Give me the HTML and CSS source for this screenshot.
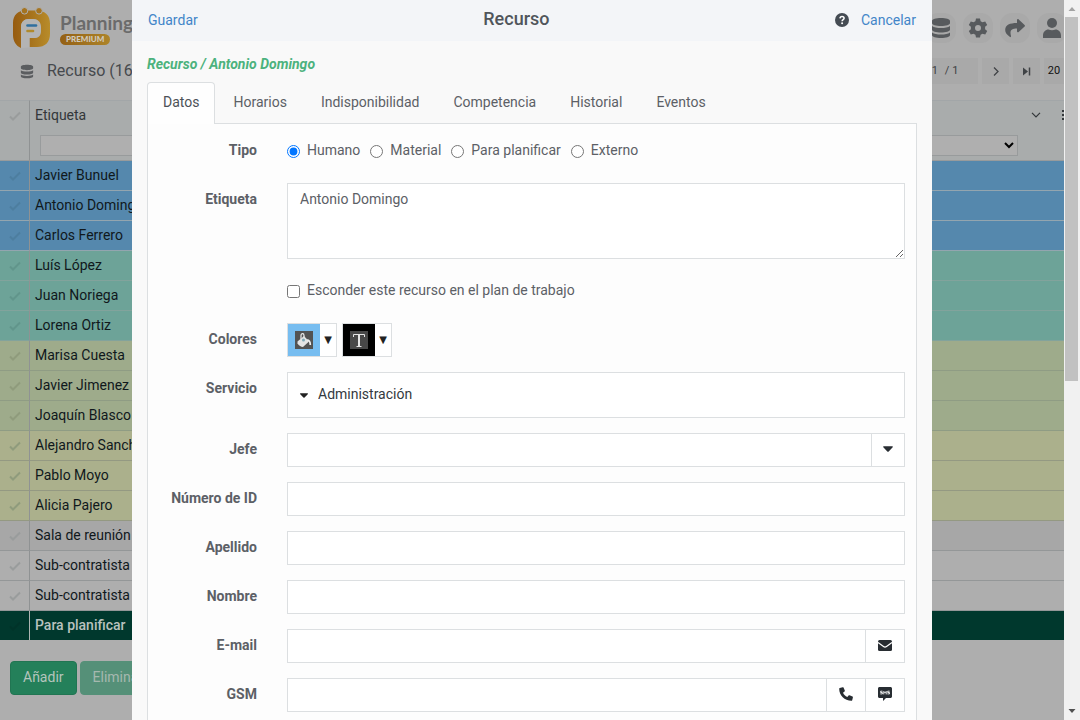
FILE: index.html
```html
<!DOCTYPE html>
<html lang="es">
<head>
<meta charset="utf-8">
<meta name="viewport" content="width=device-width, initial-scale=1">
<title>Recurso</title>
<link rel="stylesheet" href="styles.css">
</head>
<body>
<svg class="defs" aria-hidden="true">
  <symbol id="i-check" viewBox="0 0 12 10"><path d="M1 5.500 4 8.500 11 1.500" fill="none" stroke="currentColor" stroke-width="2"/></symbol>
  <symbol id="i-db" viewBox="0 0 20 22"><path d="M1 4C1 2 5 1 10 1s9 1 9 3v2c0 2-4 3-9 3S1 8 1 6zM1 9c2 1.600 5 2 9 2s7-.4 9-2v3.500c0 2-4 3-9 3s-9-1-9-3zM1 15.500c2 1.600 5 2 9 2s7-.4 9-2V18c0 2-4 3-9 3s-9-1-9-3z" fill="currentColor"/></symbol>
  <symbol id="i-gear" viewBox="0 0 20 20"><path fill="currentColor" fill-rule="evenodd" d="M8 .5h4l.6 2.700 1.900 1.100 2.700-.9 2 3.500-2.100 1.900v2.400l2.100 1.900-2 3.500-2.700-.9-1.900 1.100L12 19.500H8l-.6-2.700-1.900-1.100-2.700.9-2-3.500 2.100-1.900V8.800L.8 6.900l2-3.500 2.700.9 1.900-1.100zM10 7a3 3 0 1 0 0 6 3 3 0 0 0 0-6z"/></symbol>
  <symbol id="i-share" viewBox="0 0 20 19"><path fill="currentColor" d="M12 1.200c0-1 1-1.400 1.700-.8l5.900 5.500c.5.500.5 1.100 0 1.600l-5.900 5.500c-.7.600-1.700.2-1.700-.7V9.500c-5.500 0-7.500 1.600-6 7.600.2.900-.6 1.400-1.300.7C1.500 15.500.2 13.400.2 11c0-5.400 4.600-7 11.800-7.100z"/></symbol>
  <symbol id="i-user" viewBox="0 0 18 20"><circle cx="9" cy="5" r="5" fill="currentColor"/><path fill="currentColor" d="M0 20v-2.500C0 14 2.500 11.500 5.500 11.500c2 1 5 1 7 0 3 0 5.500 2.500 5.500 6V20z"/></symbol>
  <symbol id="i-caret" viewBox="0 0 10 6"><path fill="currentColor" d="M.8.300h8.400c.7 0 .9.500.5 1L5.700 5.400c-.4.400-1 .4-1.400 0L.300 1.300c-.4-.5-.2-1 .5-1z"/></symbol>
  <symbol id="i-chev" viewBox="0 0 10 6"><path d="M1 .8 5 4.800 9 .8" fill="none" stroke="currentColor" stroke-width="1.200"/></symbol>
</svg>

<div class="app">
  <header class="topbar">
    <div class="brand">
      <svg class="logo" viewBox="0 0 40 42" role="img" aria-label="PlanningPME">
        <defs><linearGradient id="gold" x1="0" x2="1"><stop offset="0" stop-color="#965b10"/><stop offset="1" stop-color="#b88c2a"/></linearGradient></defs>
        <path fill="url(#gold)" d="M9 41C4 39 1 34 1 28V16C1 8 6 3.500 14 3.500h11c8 0 13 5 13 13v10c0 9-5 13.500-13 13.500h-7.500V31H22c4 0 6-3 6-7v-4c0-5-3-8-7-8h-4c-5 0-8 3-8 8z"/>
        <path fill="#b4b4b4" d="M9 41V20c0-5 3-8 8-8h4c5 0 8 3 8 8v4c0 4-2 7-6 7h-5.500v9.500z"/>
        <circle cx="12.500" cy="3.800" r="3.300" fill="#a57420" stroke="#b0b0b0"/><circle cx="27" cy="3.800" r="3.300" fill="#a57420" stroke="#b0b0b0"/>
        <path d="M15.500 18.500h8.500" stroke="#2f6f9f" stroke-width="2.600" stroke-linecap="round"/>
        <path d="M15.500 24h5.500" stroke="#b08a2c" stroke-width="2.600" stroke-linecap="round"/>
      </svg>
      <div class="brand-text"><span class="brand-name">Planning</span><span class="premium">PREMIUM</span></div>
    </div>
    <nav class="tools" aria-label="Herramientas">
      <button class="tool" aria-label="Datos"><svg width="20" height="22"><use href="#i-db"/></svg></button>
      <button class="tool" aria-label="Ajustes"><svg width="20" height="20"><use href="#i-gear"/></svg></button>
      <button class="tool" aria-label="Compartir"><svg width="20" height="19"><use href="#i-share"/></svg></button>
      <button class="tool" aria-label="Usuario"><svg width="18" height="20"><use href="#i-user"/></svg></button>
    </nav>
  </header>
  <div class="titlebar">
    <h1 class="page-title"><svg width="14" height="15"><use href="#i-db"/></svg>Recurso (16)</h1>
    <div class="pager">
      <span class="page-pos"><span>1</span><span>/ 1</span></span>
      <button class="page-btn" aria-label="Siguiente"><svg width="6" height="9" viewBox="0 0 6 9"><path d="M1 .5 5 4.500 1 8.500" fill="none" stroke="currentColor" stroke-width="1.300"/></svg></button>
      <button class="page-btn" aria-label="Última"><svg width="8" height="9" viewBox="0 0 8 9"><path d="M0 .5 5 4.500 0 8.500z" fill="currentColor"/><path d="M6.500.500v8" stroke="currentColor" stroke-width="1.500"/></svg></button>
      <button class="page-size">20</button>
    </div>
  </div>
  <table class="grid">
    <thead>
      <tr class="head"><th class="tick"><svg width="12" height="10"><use href="#i-check"/></svg></th>
        <th><div class="head-cell"><span>Etiqueta</span><span class="head-icons"><svg width="10" height="6"><use href="#i-chev"/></svg><svg width="2" height="10" viewBox="0 0 2 10"><path d="M1 0v10" stroke="currentColor" stroke-width="2" stroke-dasharray="2"/></svg></span></div></th></tr>
      <tr class="filter"><th class="tick"></th><th><div class="filter-cell"><input type="text" aria-label="Filtrar etiqueta"><select aria-label="Filtro"><option></option></select></div></th></tr>
    </thead>
    <tbody>
      <tr class="blue"><td class="tick"><svg width="12" height="10"><use href="#i-check"/></svg></td><td>Javier Bunuel</td></tr>
      <tr class="blue"><td class="tick"><svg width="12" height="10"><use href="#i-check"/></svg></td><td>Antonio Domingo</td></tr>
      <tr class="blue"><td class="tick"><svg width="12" height="10"><use href="#i-check"/></svg></td><td>Carlos Ferrero</td></tr>
      <tr class="teal"><td class="tick"><svg width="12" height="10"><use href="#i-check"/></svg></td><td>Luís López</td></tr>
      <tr class="teal"><td class="tick"><svg width="12" height="10"><use href="#i-check"/></svg></td><td>Juan Noriega</td></tr>
      <tr class="teal"><td class="tick"><svg width="12" height="10"><use href="#i-check"/></svg></td><td>Lorena Ortiz</td></tr>
      <tr class="green"><td class="tick"><svg width="12" height="10"><use href="#i-check"/></svg></td><td>Marisa Cuesta</td></tr>
      <tr class="green"><td class="tick"><svg width="12" height="10"><use href="#i-check"/></svg></td><td>Javier Jimenez</td></tr>
      <tr class="green"><td class="tick"><svg width="12" height="10"><use href="#i-check"/></svg></td><td>Joaquín Blasco</td></tr>
      <tr class="yellow"><td class="tick"><svg width="12" height="10"><use href="#i-check"/></svg></td><td>Alejandro Sanchez</td></tr>
      <tr class="yellow"><td class="tick"><svg width="12" height="10"><use href="#i-check"/></svg></td><td>Pablo Moyo</td></tr>
      <tr class="yellow"><td class="tick"><svg width="12" height="10"><use href="#i-check"/></svg></td><td>Alicia Pajero</td></tr>
      <tr class="gray"><td class="tick"><svg width="12" height="10"><use href="#i-check"/></svg></td><td>Sala de reunión</td></tr>
      <tr><td class="tick"><svg width="12" height="10"><use href="#i-check"/></svg></td><td>Sub-contratista</td></tr>
      <tr><td class="tick"><svg width="12" height="10"><use href="#i-check"/></svg></td><td>Sub-contratista</td></tr>
      <tr class="dark"><td class="tick"><svg width="12" height="10"><use href="#i-check"/></svg></td><td>Para planificar</td></tr>
    </tbody>
  </table>
  <div class="actions"><button class="action">Añadir</button><button class="action muted">Eliminar</button></div>

  <div class="overlay">
    <form class="modal" role="dialog" aria-labelledby="dlg-title">
      <header class="modal-head">
        <a class="link" href="#guardar">Guardar</a>
        <h2 class="modal-title" id="dlg-title">Recurso</h2>
        <div class="head-right">
          <svg width="14" height="14" viewBox="0 0 14 14" aria-label="Ayuda"><circle cx="7" cy="7" r="7" fill="#444b53"/><path d="M5 5.400C5.100 4 6 3.500 7 3.500c1.200 0 2.100.7 2.100 1.800C9.100 6.700 7.100 6.700 7.100 8.300" fill="none" stroke="#fff" stroke-width="1.500"/><circle cx="7.100" cy="10.300" r="1" fill="#fff"/></svg>
          <a class="link" href="#cancelar">Cancelar</a>
        </div>
      </header>
      <div class="modal-body">
        <p class="crumb">Recurso / Antonio Domingo</p>
        <nav class="tabs">
          <a class="tab active" href="#datos">Datos</a><a class="tab" href="#horarios">Horarios</a><a class="tab" href="#indisponibilidad">Indisponibilidad</a><a class="tab" href="#competencia">Competencia</a><a class="tab" href="#historial">Historial</a><a class="tab" href="#eventos">Eventos</a>
        </nav>
        <div class="panel">
          <div class="row"><span class="label" id="l-tipo">Tipo</span>
            <div class="choices" role="radiogroup" aria-labelledby="l-tipo">
              <label class="choice"><input type="radio" name="tipo" checked>Humano</label>
              <label class="choice"><input type="radio" name="tipo">Material</label>
              <label class="choice"><input type="radio" name="tipo">Para planificar</label>
              <label class="choice"><input type="radio" name="tipo">Externo</label>
            </div></div>
          <div class="row"><label class="label" for="etiqueta">Etiqueta</label><textarea class="field area" id="etiqueta">Antonio Domingo</textarea></div>
          <div class="row"><span></span><div class="choices"><label class="choice"><input type="checkbox">Esconder este recurso en el plan de trabajo</label></div></div>
          <div class="row"><span class="label">Colores</span>
            <div class="colors">
              <button type="button" class="color" aria-label="Color de fondo"><span class="swatch sky"><svg width="18" height="18" viewBox="0 0 18 18"><path fill="#535353" d="M0 0h18v18H0z"/><path d="M6 8V4.500C6 2 9 2 9 4.500V8" fill="none" stroke="#eee" stroke-width="1.200"/><path fill="#e4e4e4" d="M2.500 10.500 9 5l5 5.500-6 5.500c-2 0-4-1.500-5.500-3.500z"/><circle cx="8.500" cy="9" r="1.500" fill="#7fa9b5"/><path d="M12 9c2.500 0 3.300 1.500 3.300 5" fill="none" stroke="#eee" stroke-width="1.700"/></svg></span><span class="drop">▼</span></button>
              <button type="button" class="color" aria-label="Color de texto"><span class="swatch black"><svg width="18" height="18" viewBox="0 0 18 18"><path fill="#484848" d="M0 0h18v18H0z"/><path d="M3.500 6V3.500h11V6M6.500 15.500h5" fill="none" stroke="#e4e4e4"/><path d="M9 3.500v12" stroke="#e4e4e4" stroke-width="2"/></svg></span><span class="drop">▼</span></button>
            </div></div>
          <div class="row"><label class="label" for="servicio">Servicio</label><div class="select-wrap"><select class="field" id="servicio"><option>Administración</option></select><svg class="select-caret" width="8" height="5"><use href="#i-caret"/></svg></div></div>
          <div class="row"><label class="label" for="jefe">Jefe</label><div class="group"><input class="field" id="jefe" type="text"><button type="button" class="addon narrow" aria-label="Abrir"><svg width="10" height="6"><use href="#i-caret"/></svg></button></div></div>
          <div class="row"><label class="label" for="nid">Número de ID</label><input class="field" id="nid" type="text"></div>
          <div class="row"><label class="label" for="apellido">Apellido</label><input class="field" id="apellido" type="text"></div>
          <div class="row"><label class="label" for="nombre">Nombre</label><input class="field" id="nombre" type="text"></div>
          <div class="row"><label class="label" for="email">E-mail</label><div class="group"><input class="field" id="email" type="email"><button type="button" class="addon" aria-label="Enviar e-mail"><svg width="14" height="11" viewBox="0 0 14 11"><rect width="14" height="11" rx="1.500" fill="currentColor"/><path d="M0 2.500 5.500 6.500c1 .8 2 .8 3 0L14 2.500" fill="none" stroke="#fff" stroke-width="1.200"/></svg></button></div></div>
          <div class="row"><label class="label" for="gsm">GSM</label><div class="group"><input class="field" id="gsm" type="tel"><button type="button" class="addon" aria-label="Llamar"><svg width="14" height="14" viewBox="0 0 14 14"><path fill="currentColor" d="M.8 1 3.600.200c.4-.1.700.1.900.4l1.300 3c.1.300 0 .7-.2.900L4 5.700C5 7.700 6.300 9 8.300 10l1.300-1.600c.2-.3.600-.3.900-.2l3 1.300c.3.100.5.500.4.900l-.7 2.800c-.1.400-.4.600-.8.600C5.600 13.800.2 8.400.2 1.800c0-.4.200-.7.600-.8z"/></svg></button><button type="button" class="addon" aria-label="Enviar SMS"><svg width="14" height="14" viewBox="0 0 14 14"><path fill="currentColor" d="M1.500 0h11c.8 0 1.500.7 1.500 1.500v8c0 .8-.7 1.500-1.500 1.500H8l-3 3v-3H1.500C.7 11 0 10.300 0 9.500v-8C0 .7.700 0 1.500 0z"/><path d="M4.500 4.200H2.600v1.300h1.800v1.400H2.300M5.800 7.400V4.400L7 5.900l1.200-1.500v3M11.600 4.200H9.700v1.300h1.800v1.400H9.400" fill="none" stroke="#fff" stroke-width=".9"/></svg></button></div></div>
        </div>
      </div>
    </form>
  </div>
</div>
<div class="scroll" aria-hidden="true">
  <svg class="scroll-arrow" viewBox="0 0 16 17"><path d="M4.500 11 8 7l3.500 4z" fill="#a3a3a3"/></svg>
  <div class="track"><div class="thumb"></div></div>
  <svg class="scroll-arrow" viewBox="0 0 16 17"><path d="M4.500 6 8 10l3.500-4z" fill="#505050"/></svg>
</div>
</body>
</html>
```

FILE: styles.css
```css
* { box-sizing: border-box; }
body {
  margin: 0;
  display: flex;
  height: 100vh;
  overflow: hidden;
  font: 14px/20px Roboto, "Open Sans", sans-serif;
  color: #5c6066;
}
button, input, select, textarea { font: inherit; color: inherit; }
button { padding: 0; border: 0; cursor: pointer; }
svg { display: block; flex: none; }
.defs { position: absolute; width: 0; height: 0; }

/* Background application */
.app { position: relative; flex: 1; min-width: 0; overflow: hidden; background: #aeaeae; color: #3d4043; }
.topbar { display: flex; justify-content: space-between; align-items: center; height: 56px; padding: 0 0 0 12px; }
.brand { display: flex; align-items: center; gap: 8px; }
.logo { width: 40px; height: 42px; }
.brand-text { display: flex; flex-direction: column; align-items: flex-start; }
.brand-name { font: 700 19px/22px Lato, sans-serif; color: #6b6b6b; }
.premium { padding: 0 6px; border-radius: 6px; background: linear-gradient(90deg, #946015, #ad8429); color: #d0cbc0; font: 900 8px/11px Lato, sans-serif; letter-spacing: 0; }
.tools { display: flex; gap: 7px; margin-right: -3px; }
.tool { display: grid; place-items: center; width: 30px; height: 30px; border-radius: 12px; background: #a9a9a9; color: #575a5d; }
.titlebar { display: flex; justify-content: space-between; align-items: center; height: 44px; padding: 0 0 14px 20px; }
.page-title { display: flex; align-items: center; gap: 13px; margin: 0; font-size: 16px; font-weight: 400; color: #46494d; }
.page-title svg { color: #5b5d60; }
.pager { display: flex; gap: 4px; font-size: 11px; }
.page-pos, .page-btn, .page-size { display: flex; align-items: center; justify-content: center; height: 26px; background: #a9a9a9; }
.page-pos { gap: 7px; width: 66px; }
.page-btn { width: 27px; color: #404346; }
.page-size { width: 20px; color: #111; }

.grid { width: 100%; border-collapse: separate; border-spacing: 0; color: #10181c; }
.grid th { height: 30px; padding: 0 0 2px 5px; background: #a9acac; font-weight: 400; text-align: left; color: #33373a; }
.grid .head th { border-top: 1px solid #a2a6a8; }
.grid .filter th { height: 31px; padding-bottom: 0; border-bottom: 1px solid #989b9c; }
.grid td { height: 30px; padding: 0 5px 2px; border-bottom: 1px solid #949798; }
.grid .tick { width: 30px; padding: 0 0 0 9px; border-right: 1px solid #8f9293; color: #999c9c; }
.head-cell { display: flex; justify-content: space-between; align-items: center; }
.head-icons { display: flex; align-items: center; gap: 21px; }
.filter-cell { display: flex; padding-left: 5px; padding-right: 46px; }
.filter-cell input, .filter-cell select { width: 50%; height: 21px; border: 1px solid #989b9c; border-radius: 0; background: #afafaf; color: #000; }
.grid .blue td { background: #5588ad; border-bottom-color: #93a5af; }
.grid .teal td { background: #6da398; border-bottom-color: #82a39c; }
.grid .green td { background: #9eab8b; border-bottom-color: #8f9c84; }
.grid .yellow td { background: #abb08c; border-bottom-color: #949982; }
.grid .gray td { background: #a7a7a7; }
.grid .blue .tick { color: #4d7e9f; }
.grid .teal .tick { color: #61958b; }
.grid .green .tick, .grid .yellow .tick { color: #8f9b7c; }
.grid .dark td { height: 29px; background: #00382d; color: #b9c2bf; font-weight: 500; border-bottom: 0; }
.grid .dark .tick { color: #003329; border-right-color: #aeb4b2; }
.actions { display: flex; gap: 3px; padding: 21px 10px; }
.action { height: 34px; padding: 0 12px 2px; border: 1px solid #217552; border-radius: 4px; background: #24805a; color: #b5c5bd; }
.action.muted { background: #559078; border-color: #559078; color: #a6b8af; }

/* Dialog */
.overlay { position: absolute; inset: 0; display: flex; justify-content: center; }
.modal { display: flex; flex-direction: column; width: 100%; max-width: 800px; background: #f9f9f9; color: #5c6066; }
.modal-head { display: flex; justify-content: space-between; align-items: center; height: 41px; flex: none; padding: 0 16px 2px; background: #f3f5f8; }
.modal-title { margin: 0; padding-bottom: 2px; font-size: 18px; line-height: 24px; font-weight: 500; color: #50555b; }
.head-right { display: flex; align-items: center; gap: 12px; }
.link { color: #4285c8; text-decoration: none; }
.modal-body { display: flex; flex-direction: column; flex: 1; min-height: 0; padding: 13px 15px 0; }
.crumb { margin: 0 0 8px; font-weight: 700; font-style: italic; color: #4cb27d; }
.tabs { display: flex; gap: 2px; flex: none; height: 41px; }
.tab { height: 42px; padding: 9px 15px; border: 1px solid transparent; border-radius: 4px 4px 0 0; color: #5c6066; text-decoration: none; }
.tab.active { position: relative; border-color: #dcdfe1; border-bottom: 0; background: #fefefe; color: #4c5157; }
.panel { flex: 1; min-height: 0; padding: 10px 11px 0 0; border: 1px solid #dcdfe1; border-bottom: 0; background: #fdfdfd; overflow: hidden; }
.row { display: grid; grid-template-columns: 109px minmax(0, 1fr); column-gap: 30px; margin-bottom: 15px; }
.label { padding-top: 6px; text-align: right; font-weight: 700; }
.field { display: block; width: 100%; min-width: 0; height: 34px; padding: 5px 12px; border: 1px solid #dcdfe1; border-radius: 0; background: #fff; }
.area { height: 76px; resize: vertical; }
.choices { display: flex; align-items: center; gap: 10px; height: 34px; padding-bottom: 2px; }
.choice { display: flex; align-items: flex-start; gap: 7px; }
.choice input { width: 13px; height: 13px; margin: 5px 0 0; }
.colors { display: flex; gap: 5px; }
.color { display: flex; height: 34px; border: 1px solid #dcdfe1; background: #fff; }
.swatch { display: grid; place-items: center; width: 32px; height: 32px; }
.sky { background: #77bdf0; }
.black { background: #000; }
.drop { width: 16px; text-align: center; font: 10px/32px "DejaVu Sans", sans-serif; color: #222; }
.select-wrap { position: relative; }
.select-wrap .field { height: 46px; padding: 0 30px 2px; appearance: none; color: #34393e; }
.select-caret { position: absolute; left: 13px; top: 21px; color: #222; }
.group { display: flex; }
.addon { display: grid; place-items: center; flex: none; width: 40px; height: 34px; padding-bottom: 2px; margin-left: -1px; border: 1px solid #dcdfe1; background: #fff; color: #282d32; }
.narrow { width: 34px; }

/* Scroll bar */
.scroll { display: flex; flex-direction: column; width: 16px; background: #f1f1f1; }
.scroll-arrow { width: 16px; height: 17px; }
.track { flex: 1; padding: 0 2px 0 1px; }
.thumb { height: 53%; background: #c1c1c1; }
```
